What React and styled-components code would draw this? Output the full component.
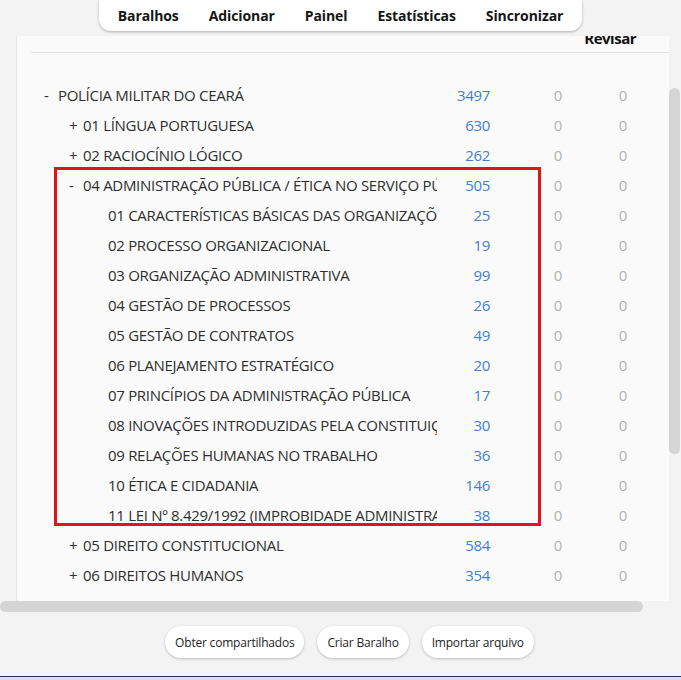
import React, { useLayoutEffect, useRef } from "react";
import styled, { createGlobalStyle } from "styled-components";

const GlobalStyle = createGlobalStyle`
  html, body {
    margin: 0;
    padding: 0;
  }
  body {
    background: #f3f3f3;
    font-family: "Open Sans", "Noto Sans", sans-serif;
    overflow: hidden;
  }
`;

const Page = styled.div`
  height: 680px;
  display: flex;
  flex-direction: column;
`;

const TopBar = styled.div`
  height: 36px;
  flex-shrink: 0;
  display: flex;
  justify-content: center;
  align-items: flex-start;
`;

const Toolbar = styled.nav`
  height: 31px;
  display: flex;
  align-items: center;
  padding: 0 4px;
  background: #fff;
  border-radius: 0 0 12px 12px;
  box-shadow: 0 1px 3px rgba(0, 0, 0, 0.28);
`;

const NavItem = styled.a`
  padding: 0 15px;
  font-size: 14px;
  font-weight: 700;
  color: #151515;
  letter-spacing: -0.1px;
  cursor: pointer;
`;

// scroll area: viewport + drawn scrollbars (headless chrome hides native ones)
const ScrollArea = styled.div`
  height: 577px;
  flex-shrink: 0;
  display: grid;
  grid-template-columns: 1fr 12px;
  grid-template-rows: 1fr 12px;
`;

const Viewport = styled.div`
  overflow: hidden;
`;

const VTrack = styled.div`
  background: #f3f3f3;
  padding-right: 1px;
`;

const HTrack = styled.div`
  background: #f3f3f3;
  padding-bottom: 1px;
`;

const Corner = styled.div`
  background: #f3f3f3;
`;

const Thumb = styled.div`
  background: #d5d5d5;
  border-radius: 6px;
  width: ${(p) => (p.$vertical ? "100%" : "auto")};
  height: ${(p) => (p.$vertical ? "auto" : "100%")};
`;

const Content = styled.div`
  width: 680px;
  padding: 40px 0 8px 16px;
`;

const Card = styled.div`
  background: #fafafa;
  border-left: 1px solid #e6e6e6;
  padding: 29px 0 20px 14px;
`;

const columns = "406px 53px 72px 65px 1fr";

const HeaderRow = styled.div`
  display: grid;
  grid-template-columns: ${columns};
  height: 27px;
  border-bottom: 1px solid #e3e3e3;
  margin-bottom: 27px;
`;

const HeaderLabel = styled.div`
  grid-column: 4;
  justify-self: end;
  margin-right: -9px;
  font-size: 15px;
  font-weight: 700;
  line-height: 27px;
  color: #111;
  letter-spacing: -0.5px;
`;

const Row = styled.div`
  display: grid;
  grid-template-columns: ${columns};
  height: 30px;
  align-items: center;
  font-size: 15px;
  line-height: 30px;
  letter-spacing: -0.3px;
`;

const NameCell = styled.div`
  overflow: hidden;
  white-space: nowrap;
  padding-left: ${(p) => 13 + p.$depth * 25}px;
  color: #2e2e2e;
`;

const Toggle = styled.span`
  display: inline-block;
  width: 14px;
`;

const Count = styled.div`
  text-align: right;
  color: ${(p) => (p.$zero ? "#b3b3b3" : "#3f7fd4")};
`;

const Group = styled.div`
  position: relative;
`;

const Highlight = styled.div`
  position: absolute;
  top: -3px;
  left: 23px;
  width: 487px;
  height: 359px;
  box-sizing: border-box;
  border: 3px solid #e0141b;
  pointer-events: none;
`;

const BottomBar = styled.div`
  height: 63px;
  flex-shrink: 0;
  box-sizing: border-box;
  display: flex;
  justify-content: center;
  align-items: flex-start;
  gap: 13px;
  padding: 13px 0 0 18px;
`;

const Button = styled.button`
  height: 32px;
  padding: 0 10px;
  border: none;
  border-radius: 16px;
  background: #fff;
  box-shadow: 0 1px 3px rgba(0, 0, 0, 0.22);
  font-family: "Open Sans", "Noto Sans", sans-serif;
  font-size: 12px;
  letter-spacing: -0.2px;
  color: #1e1e1e;
  cursor: pointer;
`;

const StatusLine = styled.div`
  height: 3px;
  border-top: 1px solid #2f2c52;
  background: #dcdce3;
`;

const before = [
  { t: "-", name: "POLÍCIA MILITAR DO CEARÁ", n: 3497, d: 0 },
  { t: "+", name: "01 LÍNGUA PORTUGUESA", n: 630, d: 1 },
  { t: "+", name: "02 RACIOCÍNIO LÓGICO", n: 262, d: 1 },
];

const group = [
  { t: "-", name: "04 ADMINISTRAÇÃO PÚBLICA / ÉTICA NO SERVIÇO PÚBLICO", n: 505, d: 1 },
  { name: "01 CARACTERÍSTICAS BÁSICAS DAS ORGANIZAÇÕES FORMAIS", n: 25, d: 2 },
  { name: "02 PROCESSO ORGANIZACIONAL", n: 19, d: 2 },
  { name: "03 ORGANIZAÇÃO ADMINISTRATIVA", n: 99, d: 2 },
  { name: "04 GESTÃO DE PROCESSOS", n: 26, d: 2 },
  { name: "05 GESTÃO DE CONTRATOS", n: 49, d: 2 },
  { name: "06 PLANEJAMENTO ESTRATÉGICO", n: 20, d: 2 },
  { name: "07 PRINCÍPIOS DA ADMINISTRAÇÃO PÚBLICA", n: 17, d: 2 },
  { name: "08 INOVAÇÕES INTRODUZIDAS PELA CONSTITUIÇÃO", n: 30, d: 2 },
  { name: "09 RELAÇÕES HUMANAS NO TRABALHO", n: 36, d: 2 },
  { name: "10 ÉTICA E CIDADANIA", n: 146, d: 2 },
  { name: "11 LEI Nº 8.429/1992 (IMPROBIDADE ADMINISTRATIVA)", n: 38, d: 2 },
];

const after = [
  { t: "+", name: "05 DIREITO CONSTITUCIONAL", n: 584, d: 1 },
  { t: "+", name: "06 DIREITOS HUMANOS", n: 354, d: 1 },
  { t: "+", name: "07 DIREITO PENAL MILITAR / PROCESSO PENAL MILITAR", n: 299, d: 1 },
  { t: "+", name: "08 DIREITO ADMINISTRATIVO", n: 412, d: 1 },
  { t: "+", name: "09 LEGISLAÇÃO INSTITUCIONAL", n: 187, d: 1 },
  { t: "+", name: "10 LEGISLAÇÃO ESPECIAL", n: 236, d: 1 },
  { t: "+", name: "11 INFORMÁTICA", n: 145, d: 1 },
  { t: "+", name: "12 HISTÓRIA E GEOGRAFIA DO CEARÁ", n: 94, d: 1 },
  { t: "+", name: "13 DIREITO PENAL", n: 123, d: 1 },
];

// viewport / content sizes used for the drawn scrollbars
const VIEW_W = 669;
const VIEW_H = 565;
const CONTENT_W = 696;
const ROW_COUNT = before.length + group.length + after.length;
const CONTENT_H = 124 + ROW_COUNT * 30 + 28;
const SCROLL_TOP = 80;

function DeckRow({ deck }) {
  return (
    <Row>
      <NameCell $depth={deck.d}>
        <Toggle>{deck.t || ""}</Toggle>
        {deck.name}
      </NameCell>
      <Count>{deck.n}</Count>
      <Count $zero>0</Count>
      <Count $zero>0</Count>
    </Row>
  );
}

export default function App() {
  const viewRef = useRef(null);

  useLayoutEffect(() => {
    if (viewRef.current) viewRef.current.scrollTop = SCROLL_TOP;
  }, []);

  const vThumb = (VIEW_H * VIEW_H) / CONTENT_H;
  const vOffset = (SCROLL_TOP / (CONTENT_H - VIEW_H)) * (VIEW_H - vThumb);
  const hThumb = (VIEW_W * VIEW_W) / CONTENT_W;

  return (
    <Page>
      <GlobalStyle />
      <TopBar>
        <Toolbar>
          <NavItem>Baralhos</NavItem>
          <NavItem>Adicionar</NavItem>
          <NavItem>Painel</NavItem>
          <NavItem>Estatísticas</NavItem>
          <NavItem>Sincronizar</NavItem>
        </Toolbar>
      </TopBar>

      <ScrollArea>
        <Viewport ref={viewRef}>
          <Content>
            <Card>
              <HeaderRow>
                <HeaderLabel>Revisar</HeaderLabel>
              </HeaderRow>
              {before.map((d) => (
                <DeckRow key={d.name} deck={d} />
              ))}
              <Group>
                {group.map((d) => (
                  <DeckRow key={d.name} deck={d} />
                ))}
                <Highlight />
              </Group>
              {after.map((d) => (
                <DeckRow key={d.name} deck={d} />
              ))}
            </Card>
          </Content>
        </Viewport>
        <VTrack>
          <Thumb $vertical style={{ marginTop: vOffset, height: vThumb }} />
        </VTrack>
        <HTrack>
          <Thumb style={{ width: hThumb }} />
        </HTrack>
        <Corner />
      </ScrollArea>

      <BottomBar>
        <Button>Obter compartilhados</Button>
        <Button>Criar Baralho</Button>
        <Button>Importar arquivo</Button>
      </BottomBar>
      <StatusLine />
    </Page>
  );
}
